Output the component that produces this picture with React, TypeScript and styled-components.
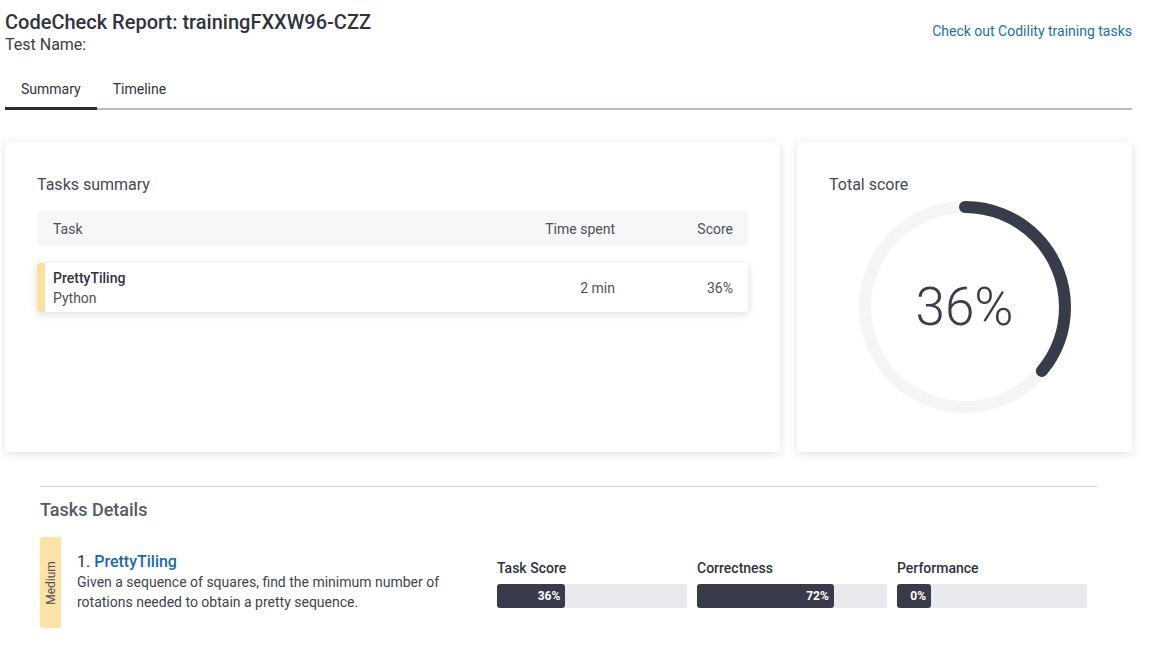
import styled, { createGlobalStyle } from "styled-components";

const GlobalStyle = createGlobalStyle`
  body {
    margin: 0;
    background: #fff;
    font-family: Roboto, "Liberation Sans", Arial, sans-serif;
    color: #3a3d4b;
  }
`;

const Page = styled.div`
  width: 1127px;
  padding: 0 18px 0 5px;
`;

const Header = styled.header`
  display: flex;
  justify-content: space-between;
  align-items: flex-start;
  padding-top: 10px;
`;

const Title = styled.h1`
  margin: 0;
  font-size: 20px;
  line-height: 24px;
  font-weight: 500;
  color: #30333e;
`;

const SubTitle = styled.div`
  font-size: 16px;
  line-height: 20px;
  margin-top: 1px;
  color: #3a3d4b;
`;

const TrainingLink = styled.a`
  margin-top: 11px;
  font-size: 14px;
  line-height: 20px;
  color: #1d6fa5;
  text-decoration: none;
`;

const Tabs = styled.nav`
  display: flex;
  margin-top: 15px;
  border-bottom: 2px solid #b8bec7;
`;

const Tab = styled.div<{ $active?: boolean }>`
  padding: 9px 16px 8px;
  font-size: 14px;
  line-height: 20px;
  color: #30333e;
  margin-bottom: -2px;
  border-bottom: 3px solid ${(p) => (p.$active ? "#2a2d36" : "transparent")};
`;

const Cards = styled.div`
  display: grid;
  grid-template-columns: 775px 335px;
  gap: 17px;
  margin-top: 32px;
`;

const Card = styled.section`
  height: 310px;
  box-sizing: border-box;
  padding: 33px 32px 32px;
  background: #fff;
  border-radius: 2px;
  box-shadow: 0 2px 10px rgba(40, 45, 60, 0.14);
`;

const CardTitle = styled.h2`
  margin: 0;
  font-size: 16px;
  line-height: 20px;
  font-weight: 400;
  color: #454955;
`;

const TableRowGrid = styled.div`
  display: grid;
  grid-template-columns: 1fr 140px 118px;
  align-items: center;
  padding: 0 15px 0 16px;
  font-size: 14px;
  color: #4d515c;
`;

const TableHead = styled(TableRowGrid)`
  margin-top: 16px;
  height: 35px;
  background: #f6f7f9;
  border-radius: 2px;
`;

const TaskRow = styled(TableRowGrid)`
  margin-top: 17px;
  height: 49px;
  background: #fff;
  border-left: 8px solid #fde0a0;
  padding-left: 8px;
  border-radius: 3px;
  box-shadow: 0 2px 8px rgba(40, 45, 60, 0.16);
`;

const RightCell = styled.div`
  text-align: right;
`;

const TaskName = styled.div`
  font-weight: 500;
  color: #30333e;
  line-height: 20px;
`;

const TaskLang = styled.div`
  line-height: 20px;
  color: #4d515c;
`;

const ScoreWrap = styled.div`
  position: relative;
  width: 212px;
  height: 212px;
  margin: 6px auto 0;
`;

const ScoreText = styled.div`
  position: absolute;
  inset: 0;
  display: flex;
  align-items: center;
  justify-content: center;
  font-size: 53px;
  font-weight: 300;
  color: #3a3d4b;
`;

const Divider = styled.hr`
  margin: 34px 35px 0;
  border: none;
  border-top: 1px solid #cfd2d6;
`;

const Details = styled.section`
  padding: 0 35px;
`;

const DetailsTitle = styled.h3`
  margin: 11px 0 15px;
  font-size: 18px;
  line-height: 24px;
  font-weight: 500;
  color: #555a63;
`;

const DetailRow = styled.div`
  display: flex;
  align-items: center;
  height: 91px;
`;

const Difficulty = styled.div`
  width: 21px;
  height: 91px;
  background: #fde3a7;
  border-radius: 3px 0 0 3px;
  display: flex;
  align-items: center;
  justify-content: center;
  flex-shrink: 0;
`;

const DifficultyLabel = styled.span`
  transform: rotate(-90deg);
  font-size: 12px;
  color: #4d515c;
  white-space: nowrap;
`;

const TaskInfo = styled.div`
  width: 380px;
  margin-left: 16px;
  margin-right: 40px;
  margin-top: -2px;
`;

const TaskHeading = styled.div`
  font-size: 16px;
  line-height: 20px;
  color: #30333e;
`;

const TaskLink = styled.a`
  color: #1b6aa5;
  font-weight: 500;
  text-decoration: none;
`;

const TaskDesc = styled.p`
  margin: 0;
  font-size: 14px;
  line-height: 20px;
  color: #3f4350;
`;

const Metrics = styled.div`
  display: grid;
  grid-template-columns: repeat(3, 190px);
  gap: 10px;
  margin-top: 2px;
`;

const Metric = styled.div`
  display: flex;
  flex-direction: column;
  gap: 8px;
`;

const MetricLabel = styled.div`
  font-size: 14px;
  line-height: 16px;
  font-weight: 500;
  color: #30333e;
`;

const Bar = styled.div`
  height: 24px;
  background: #e8eaee;
  border-radius: 3px;
  display: flex;
`;

const BarFill = styled.div`
  min-width: 34px;
  box-sizing: border-box;
  height: 100%;
  background: #383b4a;
  border-radius: 3px;
  color: #fff;
  font-size: 12px;
  font-weight: 700;
  display: flex;
  align-items: center;
  justify-content: flex-end;
  padding-right: 5px;
`;

function ScoreRing({ value }: { value: number }) {
  const r = 100;
  const c = 2 * Math.PI * r;
  return (
    <ScoreWrap>
      <svg width="212" height="212" viewBox="0 0 212 212">
        <circle cx="106" cy="106" r={r} fill="none" stroke="#f4f5f7" strokeWidth="12" />
        <circle
          cx="106"
          cy="106"
          r={r}
          fill="none"
          stroke="#383b4a"
          strokeWidth="12"
          strokeLinecap="round"
          strokeDasharray={`${(c * value) / 100} ${c}`}
          transform="rotate(-90 106 106)"
        />
      </svg>
      <ScoreText>{value}%</ScoreText>
    </ScoreWrap>
  );
}

const metrics = [
  { label: "Task Score", value: 36 },
  { label: "Correctness", value: 72 },
  { label: "Performance", value: 0 },
];

export default function App() {
  return (
    <>
      <GlobalStyle />
      <Page>
        <Header>
          <div>
            <Title>CodeCheck Report: trainingFXXW96-CZZ</Title>
            <SubTitle>Test Name:</SubTitle>
          </div>
          <TrainingLink href="#">Check out Codility training tasks</TrainingLink>
        </Header>
        <Tabs>
          <Tab $active>Summary</Tab>
          <Tab>Timeline</Tab>
        </Tabs>
        <Cards>
          <Card>
            <CardTitle>Tasks summary</CardTitle>
            <TableHead>
              <div>Task</div>
              <RightCell>Time spent</RightCell>
              <RightCell>Score</RightCell>
            </TableHead>
            <TaskRow>
              <div>
                <TaskName>PrettyTiling</TaskName>
                <TaskLang>Python</TaskLang>
              </div>
              <RightCell>2 min</RightCell>
              <RightCell>36%</RightCell>
            </TaskRow>
          </Card>
          <Card>
            <CardTitle>Total score</CardTitle>
            <ScoreRing value={36} />
          </Card>
        </Cards>
        <Divider />
        <Details>
          <DetailsTitle>Tasks Details</DetailsTitle>
          <DetailRow>
            <Difficulty>
              <DifficultyLabel>Medium</DifficultyLabel>
            </Difficulty>
            <TaskInfo>
              <TaskHeading>
                1. <TaskLink href="#">PrettyTiling</TaskLink>
              </TaskHeading>
              <TaskDesc>
                Given a sequence of squares, find the minimum number of rotations needed to obtain a pretty
                sequence.
              </TaskDesc>
            </TaskInfo>
            <Metrics>
              {metrics.map((m) => (
                <Metric key={m.label}>
                  <MetricLabel>{m.label}</MetricLabel>
                  <Bar>
                    <BarFill style={{ width: `${m.value}%` }}>{m.value}%</BarFill>
                  </Bar>
                </Metric>
              ))}
            </Metrics>
          </DetailRow>
        </Details>
      </Page>
    </>
  );
}
